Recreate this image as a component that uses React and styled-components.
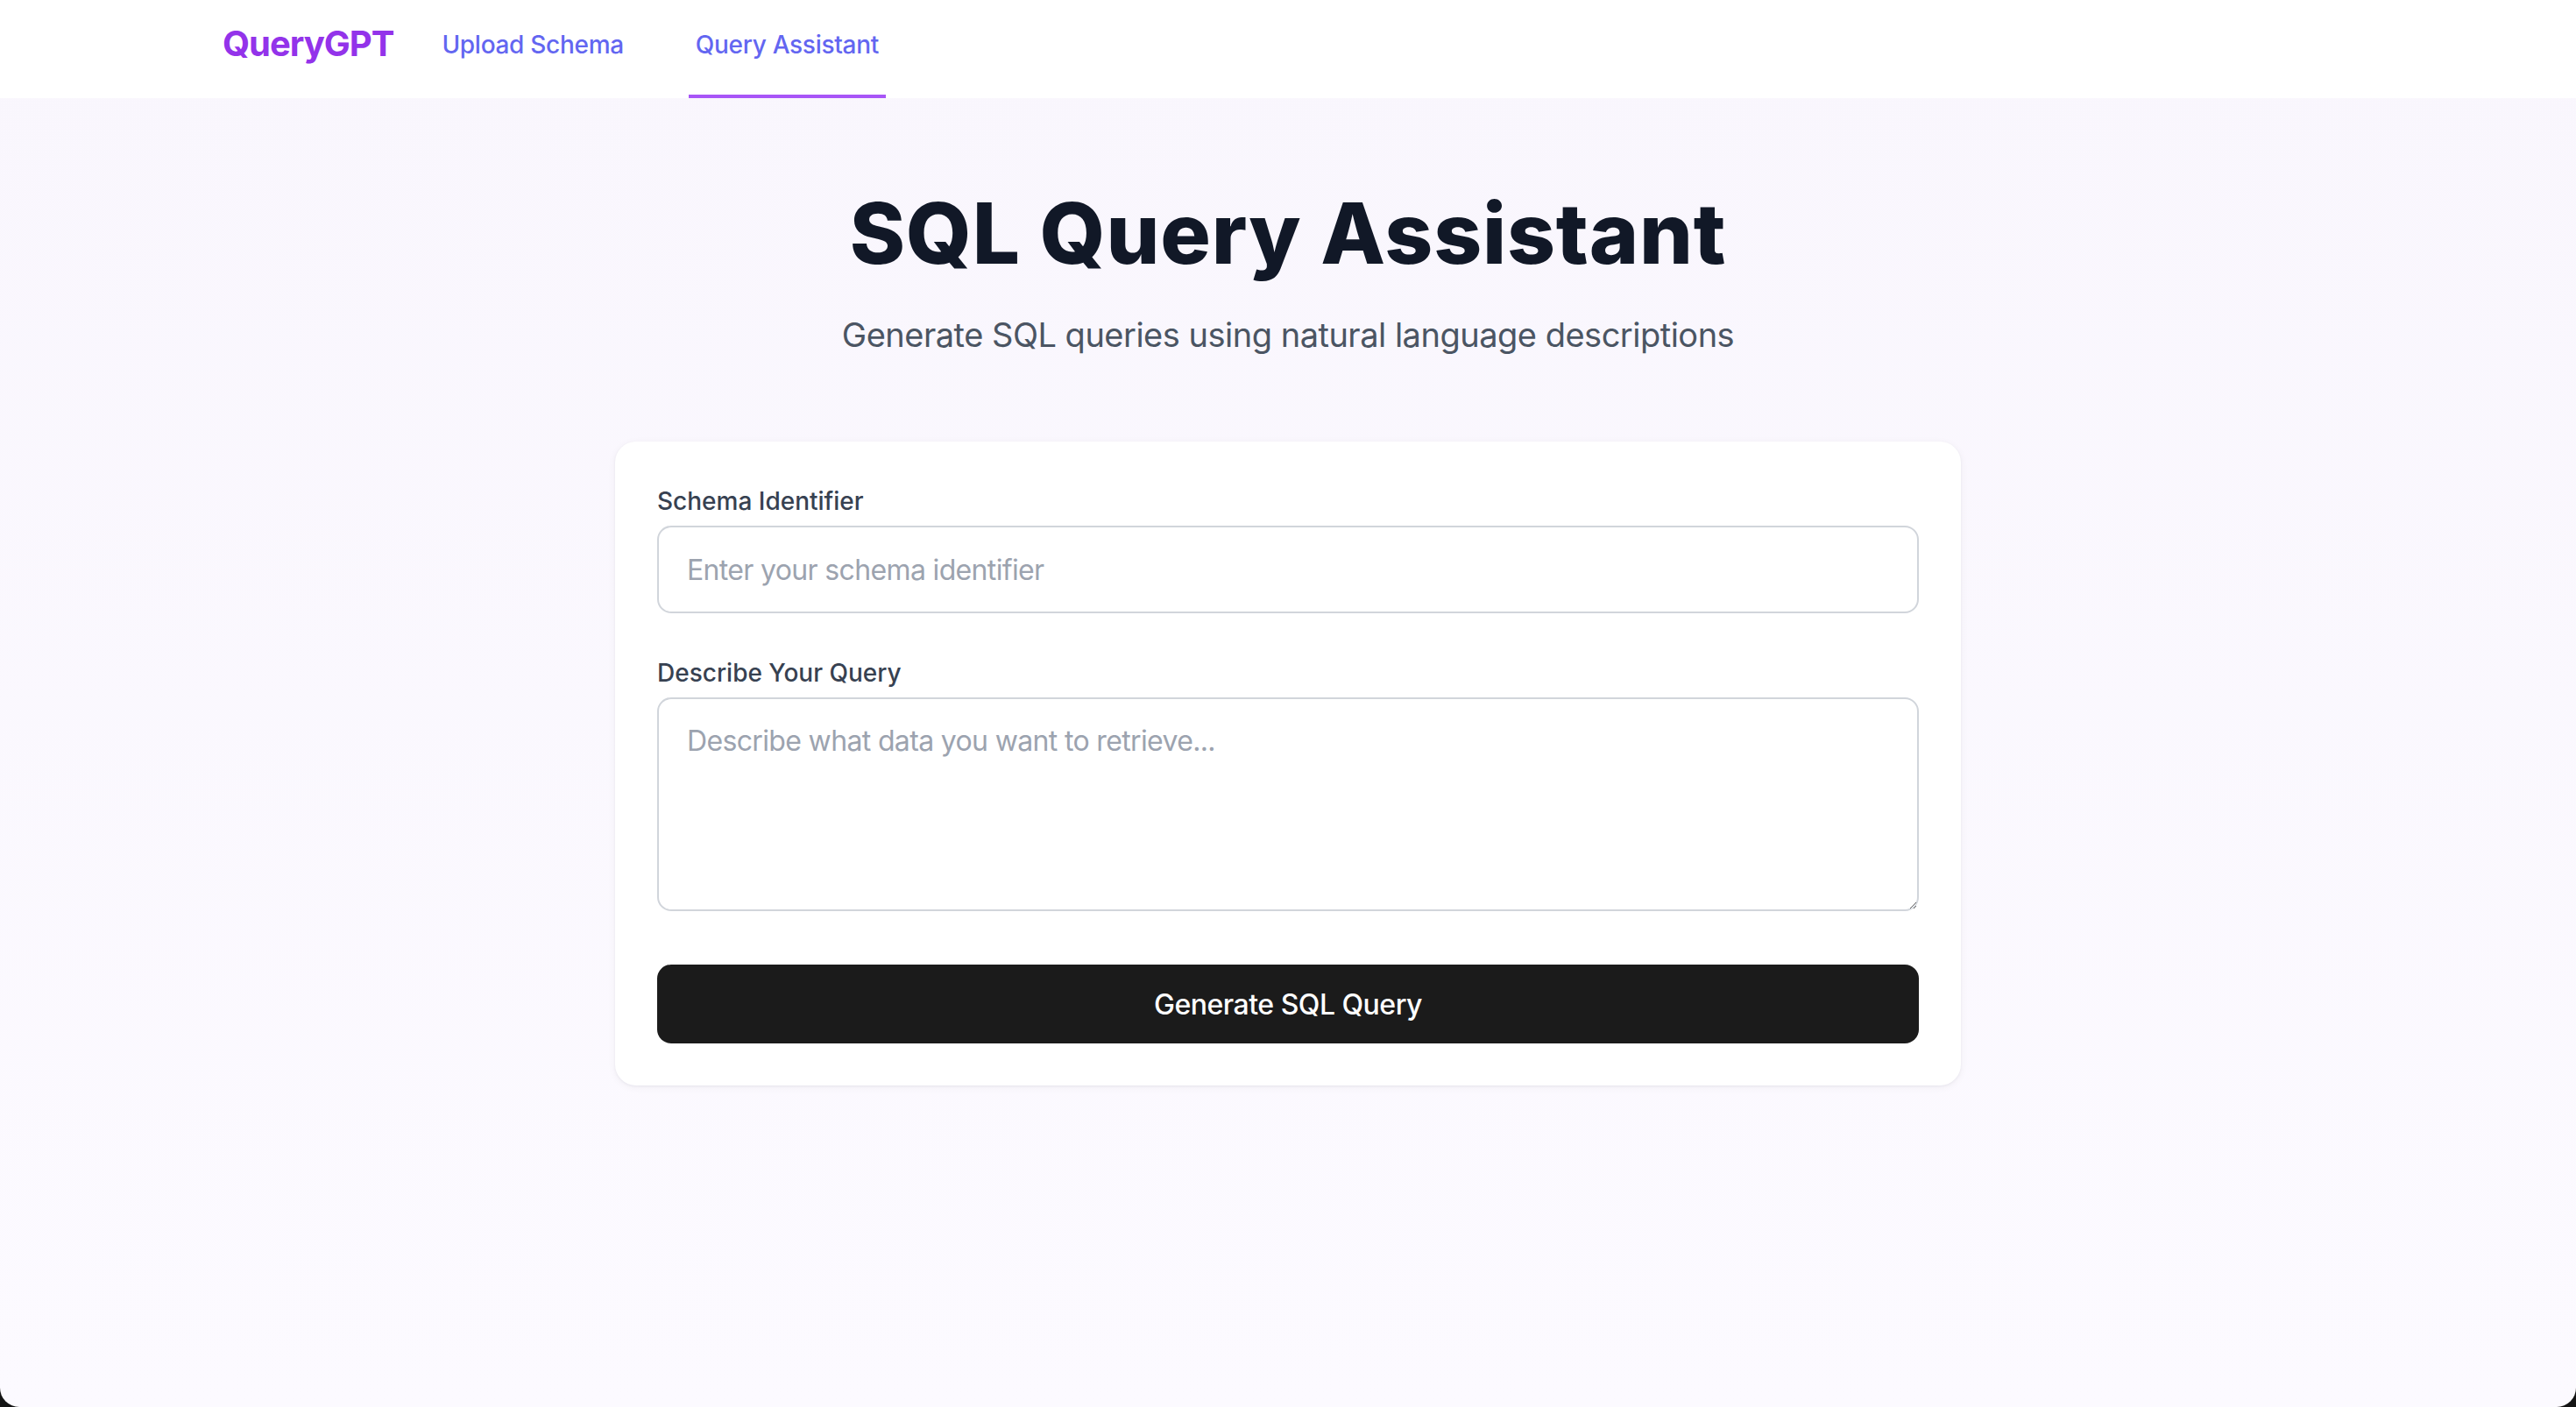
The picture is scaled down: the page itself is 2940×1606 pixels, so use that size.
import React from "react";
import styled, { createGlobalStyle } from "styled-components";

const Global = createGlobalStyle`
  * { box-sizing: border-box; }
  html, body { margin: 0; padding: 0; background: #141414; }
  body { font-family: Inter, "Noto Sans", "Liberation Sans", sans-serif; }
`;

const Window = styled.div`
  width: 2940px;
  height: 1606px;
  overflow: hidden;
  border-bottom-left-radius: 22px;
  border-bottom-right-radius: 22px;
  background: linear-gradient(180deg, #f9f6fd 0%, #fcfaff 100%);
  display: flex;
  flex-direction: column;
`;

const Header = styled.header`
  background: #ffffff;
  height: 112px;
  flex: none;
`;

const HeaderInner = styled.div`
  max-width: 2560px;
  margin: 0 auto;
  padding: 0 64px;
  height: 100%;
  display: flex;
  align-items: stretch;
`;

const Logo = styled.div`
  display: flex;
  align-items: center;
  padding-bottom: 13px;
  font-size: 40px;
  font-weight: 700;
  color: #9333ea;
  margin-right: 47px;
  letter-spacing: -1px;
`;

const Tabs = styled.nav`
  display: flex;
  align-items: stretch;
  gap: 66px;
`;

const Tab = styled.a`
  display: flex;
  align-items: center;
  padding: 0 8px 7px;
  font-size: 28px;
  font-weight: 500;
  letter-spacing: -0.3px;
  color: #6366f1;
  text-decoration: none;
  border-bottom: 4px solid ${(p) => (p.$active ? "#a855f7" : "transparent")};
`;

const Main = styled.main`
  display: flex;
  flex-direction: column;
  align-items: center;
  padding-top: 106px;
`;

const Title = styled.h1`
  margin: 0;
  font-size: 96px;
  line-height: 96px;
  font-weight: 800;
  color: #111827;
  letter-spacing: 0.8px;
`;

const Subtitle = styled.p`
  margin: 40px 0 0;
  font-size: 38px;
  line-height: 56px;
  letter-spacing: -0.5px;
  color: #4b5563;
`;

const Card = styled.section`
  margin-top: 94px;
  width: 1536px;
  background: #ffffff;
  border-radius: 24px;
  padding: 48px;
  box-shadow: 0 2px 10px rgba(17, 24, 39, 0.05), 0 1px 3px rgba(17, 24, 39, 0.05);
  display: flex;
  flex-direction: column;
`;

const Field = styled.div`
  display: flex;
  flex-direction: column;
  margin-top: ${(p) => p.$gap || 0}px;
`;

const Label = styled.label`
  font-size: 28px;
  line-height: 40px;
  font-weight: 500;
  color: #374151;
  margin-bottom: 8px;
`;

const Input = styled.input`
  display: block;
  width: 100%;
  height: 100px;
  padding: 24px 32px;
  font-family: inherit;
  font-size: 32px;
  line-height: 48px;
  letter-spacing: -0.65px;
  color: #111827;
  border: 2px solid #d1d5db;
  border-radius: 16px;
  background: #fff;
  outline: none;
  &::placeholder { color: #9ca3af; }
`;

const TextArea = styled.textarea`
  display: block;
  width: 100%;
  height: 244px;
  padding: 24px 32px;
  font-family: inherit;
  font-size: 32px;
  line-height: 48px;
  letter-spacing: -0.65px;
  color: #111827;
  border: 2px solid #d1d5db;
  border-radius: 16px;
  background: #fff;
  outline: none;
  resize: vertical;
  &::placeholder { color: #9ca3af; }
`;

const Button = styled.button`
  margin-top: 61px;
  width: 100%;
  height: 90px;
  padding: 22px 0 20px;
  border: none;
  border-radius: 16px;
  background: #1b1b1b;
  color: #ffffff;
  font-family: inherit;
  font-size: 32px;
  line-height: 48px;
  font-weight: 500;
  letter-spacing: -0.5px;
  cursor: pointer;
`;

export default function App() {
  return (
    <>
      <Global />
      <Window>
        <Header>
          <HeaderInner>
            <Logo>QueryGPT</Logo>
            <Tabs>
              <Tab href="#">Upload Schema</Tab>
              <Tab href="#" $active>Query Assistant</Tab>
            </Tabs>
          </HeaderInner>
        </Header>
        <Main>
          <Title>SQL Query Assistant</Title>
          <Subtitle>Generate SQL queries using natural language descriptions</Subtitle>
          <Card>
            <Field>
              <Label>Schema Identifier</Label>
              <Input placeholder="Enter your schema identifier" />
            </Field>
            <Field $gap={48}>
              <Label>Describe Your Query</Label>
              <TextArea placeholder="Describe what data you want to retrieve..." />
            </Field>
            <Button>Generate SQL Query</Button>
          </Card>
        </Main>
      </Window>
    </>
  );
}
